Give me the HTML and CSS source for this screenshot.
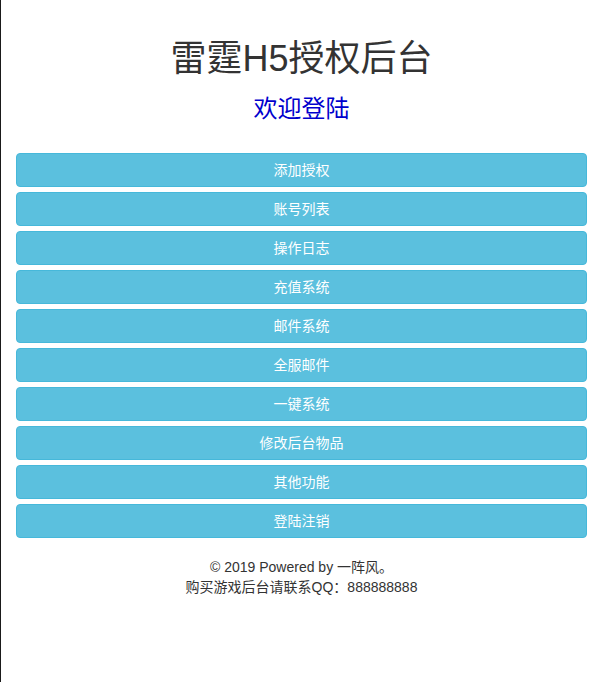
FILE: index.html
```html
<!DOCTYPE html>
<html lang="zh-CN">
<head>
<meta charset="utf-8">
<title>雷霆H5授权后台</title>
<link rel="stylesheet" href="styles.css">
</head>
<body>
<div class="page">
  <header class="head">
    <h1 class="title">雷霆H5授权后台</h1>
    <h2 class="welcome">欢迎登陆</h2>
  </header>
  <nav class="menu">
    <a class="btn">添加授权</a>
    <a class="btn">账号列表</a>
    <a class="btn">操作日志</a>
    <a class="btn">充值系统</a>
    <a class="btn">邮件系统</a>
    <a class="btn">全服邮件</a>
    <a class="btn">一键系统</a>
    <a class="btn">修改后台物品</a>
    <a class="btn">其他功能</a>
    <a class="btn">登陆注销</a>
  </nav>
  <footer class="foot">
    <p>© 2019 Powered by 一阵风。</p>
    <p>购买游戏后台请联系QQ：888888888</p>
  </footer>
</div>
</body>
</html>
```
FILE: styles.css
```css
html, body {
  margin: 0;
  padding: 0;
  background: #fff;
}
body {
  font-family: "Liberation Sans", Arial, "Noto Sans CJK SC", sans-serif;
  font-size: 14px;
  line-height: 20px;
  color: #333;
}
.page {
  min-height: 682px;
  box-sizing: border-box;
  border-left: 1px solid #1a1a1a;
  padding: 0 15px;
}
.head {
  text-align: center;
  padding-top: 39px;
}
.title {
  margin: 0;
  font-size: 36px;
  line-height: 40px;
  font-weight: 400;
  color: #333;
}
.welcome {
  margin: 17px 0 0;
  font-size: 24px;
  line-height: 26px;
  font-weight: 400;
  color: #0000cd;
}
.menu {
  margin-top: 31px;
  display: flex;
  flex-direction: column;
  gap: 5px;
}
.btn {
  display: block;
  box-sizing: border-box;
  height: 34px;
  padding: 6px 12px;
  font-size: 14px;
  line-height: 20px;
  text-align: center;
  color: #fff;
  background: #5bc0de;
  border: 1px solid #46b8da;
  border-radius: 4px;
}
.foot {
  margin-top: 19px;
  text-align: center;
}
.foot p {
  margin: 0;
}
```
